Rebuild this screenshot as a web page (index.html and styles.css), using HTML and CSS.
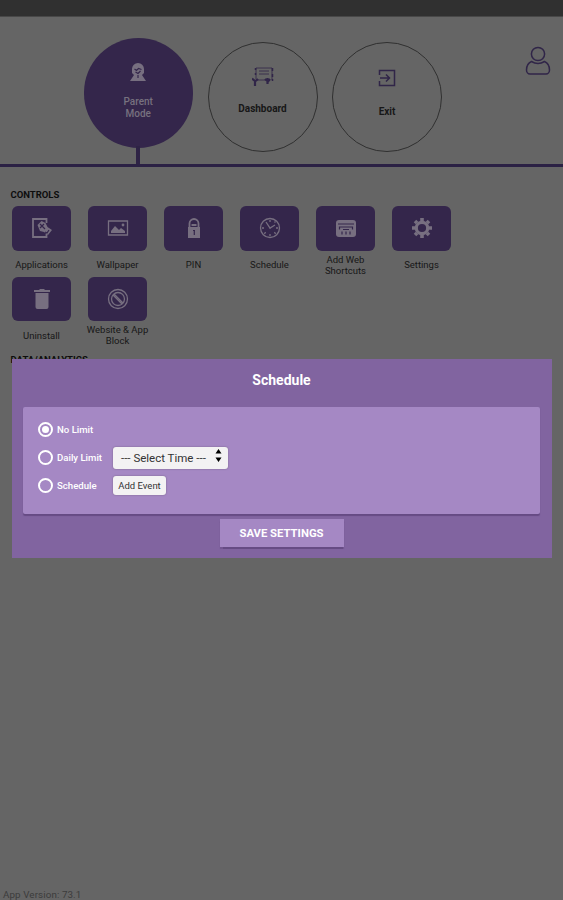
FILE: index.html
```html
<!DOCTYPE html>
<html lang="en">
<head>
<meta charset="utf-8">
<title>Parent Mode</title>
<link rel="stylesheet" href="styles.css">
</head>
<body>
<div class="statusbar"></div>
<header class="header">
  <nav class="modes">
    <div class="mode mode-active">
      <svg width="18" height="20" viewBox="0 0 18 20"><path class="fill" d="M3 11V7a6 6 0 0 1 12 0v4l-2 2 4 6H1l4-6z"/><path class="cut" d="M5.500 7l2 1.500 2-2 3 1M6.500 10l2.500 1.500L11.500 9M9 13v3"/></svg>
      <span>Parent<br>Mode</span>
    </div>
    <div class="mode mode-dashboard">
      <svg width="22" height="20" viewBox="0 0 22 20"><path class="line thin" d="M4 1h16v12M4 1v11M7 4h10M7 7h10M4 13h14"/><path class="line" d="M3.500 1v2m0 3v2M20.500 1v3m0 3v3M20.500 12v2"/><path class="line bold" d="M0 11.500l3 2.500v5M3 14.500l3-2.500M13 12l3 2.500 2-2.500M15.500 11v6"/></svg>
      <span>Dashboard</span>
    </div>
    <div class="mode mode-exit">
      <svg width="18" height="18" viewBox="0 0 18 18"><path class="line" d="M1.500 6V1.500h15v15h-15V12M2 9h9M8 5.500 11.500 9 8 12.500"/></svg>
      <span>Exit</span>
    </div>
  </nav>
  <svg class="profile" width="26" height="30" viewBox="0 0 26 30"><circle class="line" cx="13" cy="8" r="6.600"/><path class="line" d="M6.500 15.500C3 17 1.500 20 1.500 24c0 2 1.500 4 3.500 4h16c2 0 3.500-2 3.500-4 0-4-1.500-7-5-8.500-4 2.500-9 2.500-13 0z"/></svg>
</header>
<main class="controls">
  <h2>CONTROLS</h2>
  <div class="grid">
    <div class="item"><div class="tile"><svg width="22" height="22" viewBox="0 0 22 22"><path class="line wide" d="M15.500 6V2H2v18h13.500v-3"/><path class="fill" d="M6.500 8l4-4 4 2 2 4 4.500 3-4 5-4-3-4-1z"/><path class="cut" d="M9 7l5 5m-1-5-4 4m5 4 2 1 2-3"/></svg></div><p>Applications</p></div>
    <div class="item"><div class="tile"><svg width="22" height="22" viewBox="0 0 22 22"><path class="line" d="M1.500 4h19v14h-19z"/><path class="fill" d="M4 16v-2l4-5 4 4 2-2 4 3v2z"/><circle class="fill" cx="16" cy="8" r="1.400"/></svg></div><p>Wallpaper</p></div>
    <div class="item"><div class="tile"><svg width="22" height="22" viewBox="0 0 22 22"><path class="line wide" d="M6.500 11V6.500a4.500 4.500 0 0 1 9 0V11M8.500 8h5"/><path class="fill" d="M5 10h12v11H5z"/><path class="cut" d="M10 13.500h2M11.300 13v5"/></svg></div><p>PIN</p></div>
    <div class="item"><div class="tile"><svg width="22" height="22" viewBox="0 0 22 22"><circle class="line" cx="11" cy="11" r="9.500"/><path class="line" d="M7 5l4 6 5-3M11 3v2m0 12v2M3 11h2m12 0h2M5.300 16.700l1.400-1.400M16.700 16.700l-1.400-1.400M15.500 5.500l1-1M11 11v1"/></svg></div><p>Schedule</p></div>
    <div class="item"><div class="tile"><svg width="22" height="22" viewBox="0 0 22 22"><rect class="fill" x="1" y="3" width="20" height="17" rx="3"/><path class="cut" d="M3 7h16M4.500 12.500V10h13v2.500M8 12.500h6M7 14.500v3M11 14.500v3M15 14.500v3"/></svg></div><p>Add Web<br>Shortcuts</p></div>
    <div class="item"><div class="tile"><svg width="22" height="22" viewBox="0 0 22 22"><circle class="gear" cx="11" cy="11" r="5.700"/><path class="teeth" d="M11 4V1m0 17v3M4 11H1m17 0h3M6 6 4 4m12 12 2 2M6 16l-2 2M16 6l2-2"/></svg></div><p>Settings</p></div>
    <div class="item"><div class="tile"><svg width="22" height="22" viewBox="0 0 22 22"><path class="fill" d="M3 2h5l1-1h4l1 1h5v2H3zM4.500 5h13v14a2 2 0 0 1-2 2h-9a2 2 0 0 1-2-2z"/></svg></div><p>Uninstall</p></div>
    <div class="item"><div class="tile"><svg width="22" height="22" viewBox="0 0 22 22"><circle class="line" cx="11" cy="11" r="9.500"/><circle class="line" cx="11" cy="11" r="6.500"/><path class="line" d="M6 7l9 9M7 6l9 9"/></svg></div><p>Website &amp; App<br>Block</p></div>
  </div>
  <h2 class="analytics">DATA/ANALYTICS</h2>
</main>
<footer>App Version: 73.1</footer>

<section class="modal">
  <h1>Schedule</h1>
  <div class="panel">
    <div class="option"><i class="radio checked"></i><label>No Limit</label></div>
    <div class="option"><i class="radio"></i><label>Daily Limit</label>
      <div class="select"><span>--- Select Time ---</span><svg width="7" height="13" viewBox="0 0 7 13"><path d="M0.500 4.500 3.500 0l3 4.500zM0.500 8.500h6L3.500 13z"/></svg></div></div>
    <div class="option"><i class="radio"></i><label>Schedule</label><button class="add">Add Event</button></div>
  </div>
  <button class="save">SAVE SETTINGS</button>
</section>
</body>
</html>
```
FILE: styles.css
```css
* { box-sizing: border-box; }
body {
  margin: 0;
  height: 900px;
  display: flex;
  flex-direction: column;
  position: relative;
  overflow: hidden;
  background: #656565;
  color: #171717;
  font-family: Roboto, "Liberation Sans", sans-serif;
}
h1, h2, p { margin: 0; }
svg { display: block; flex: none; }
button { border: 0; padding: 0; font-family: inherit; }

.statusbar { height: 17px; background: #303030; border-bottom: 1px solid #484848; }
.header {
  height: 150px;
  display: flex;
  justify-content: space-between;
  padding: 21px 12px 0 83px;
  border-bottom: 3px solid #2b2144;
}
.modes { display: flex; gap: 14.500px; }
.mode {
  width: 110px;
  height: 110px;
  margin-top: 4px;
  border: 1.500px solid #303030;
  border-radius: 50%;
  display: flex;
  flex-direction: column;
  align-items: center;
  text-align: center;
  font-size: 10px;
  line-height: 12px;
  font-weight: 700;
}
.mode-active {
  position: relative;
  width: 109.500px;
  height: 109.500px;
  margin-top: 0;
  margin-left: 0.500px;
  padding-top: 24px;
  gap: 14px;
  border: 0;
  background: #34264b;
  color: #77717f;
  font-weight: 500;
}
.mode-active::after {
  content: "";
  position: absolute;
  top: 108px;
  left: 52.500px;
  width: 4px;
  height: 18px;
  background: #2e2345;
}
.mode-dashboard { padding-top: 24px; gap: 16px; }
.mode-exit { padding-top: 26px; gap: 19px; }
.profile { margin-top: 8px; }

.line { fill: none; stroke: #302548; stroke-width: 1.500; }
.thin { stroke-width: 0.800; }
.bold { stroke-width: 2.200; }
.fill { fill: #776f80; }
.cut { fill: none; stroke: #34264b; stroke-width: 1.200; }
.tile .line { stroke: #776f80; stroke-width: 1.300; }
.tile .wide { stroke-width: 1.800; }
.gear { fill: none; stroke: #776f80; stroke-width: 3.200; }
.teeth { fill: none; stroke: #776f80; stroke-width: 3.600; }

.controls { flex: 1; padding: 22px 0 0 3.500px; }
h2 { padding-left: 7px; font-size: 9.500px; line-height: 12px; font-weight: 700; color: #0d0d0d; }
.grid {
  display: grid;
  grid-template-columns: repeat(6, 76px);
  grid-auto-rows: 70.500px;
  padding-top: 5px;
}
.item { display: flex; flex-direction: column; align-items: center; }
.tile {
  width: 59px;
  height: 45px;
  border-radius: 6px;
  background: #34264b;
  display: flex;
  align-items: center;
  justify-content: center;
}
.item p {
  height: 26px;
  display: flex;
  align-items: center;
  text-align: center;
  font-size: 9.500px;
  line-height: 11px;
  white-space: nowrap;
  padding-top: 2px;
}
.analytics { margin-top: 7px; }
footer { height: 11px; padding-left: 3px; font-size: 9.800px; line-height: 12px; color: #3c3c3c; letter-spacing: 0.100px; }

.modal {
  position: absolute;
  top: 359px;
  left: 12px;
  width: 540px;
  height: 199px;
  padding: 0 12px 0 11px;
  display: flex;
  flex-direction: column;
  align-items: center;
  background: #8164a0;
  color: #fff;
}
h1 { font-size: 14px; line-height: 18px; margin-top: 12px; font-weight: 700; }
.panel {
  width: 100%;
  height: 107px;
  margin-top: 17.500px;
  padding: 9px 15px;
  display: grid;
  grid-template-rows: repeat(3, 28px);
  border-radius: 2px;
  background: #a588c4;
  box-shadow: 0 1.500px 1px #664b84;
}
.option { display: flex; align-items: center; }
.option label { width: 60px; padding-left: 4px; font-size: 9.600px; line-height: 12px; font-weight: 500; white-space: nowrap; }
.radio { width: 15px; height: 15px; border: 2px solid #fff; border-radius: 50%; display: flex; align-items: center; justify-content: center; }
.checked::after { content: ""; width: 7px; height: 7px; border-radius: 50%; background: #fff; }
.select, .add { border-radius: 3px; background: #f3f2f3; color: #333; box-shadow: 0 0 2px #756084; }
.select { width: 115px; height: 22px; display: flex; align-items: center; justify-content: space-between; padding: 0 6px 0 8px; font-size: 11.500px; white-space: nowrap; }
.select svg { margin-top: -4px; }
.add { width: 53px; height: 19px; font-size: 9.500px; }
.save { width: 124px; height: 28px; margin-top: 5.500px; background: #a588c4; color: #fff; font-size: 11.300px; font-weight: 700; box-shadow: 0 1.500px 1px #664b84; }
```
